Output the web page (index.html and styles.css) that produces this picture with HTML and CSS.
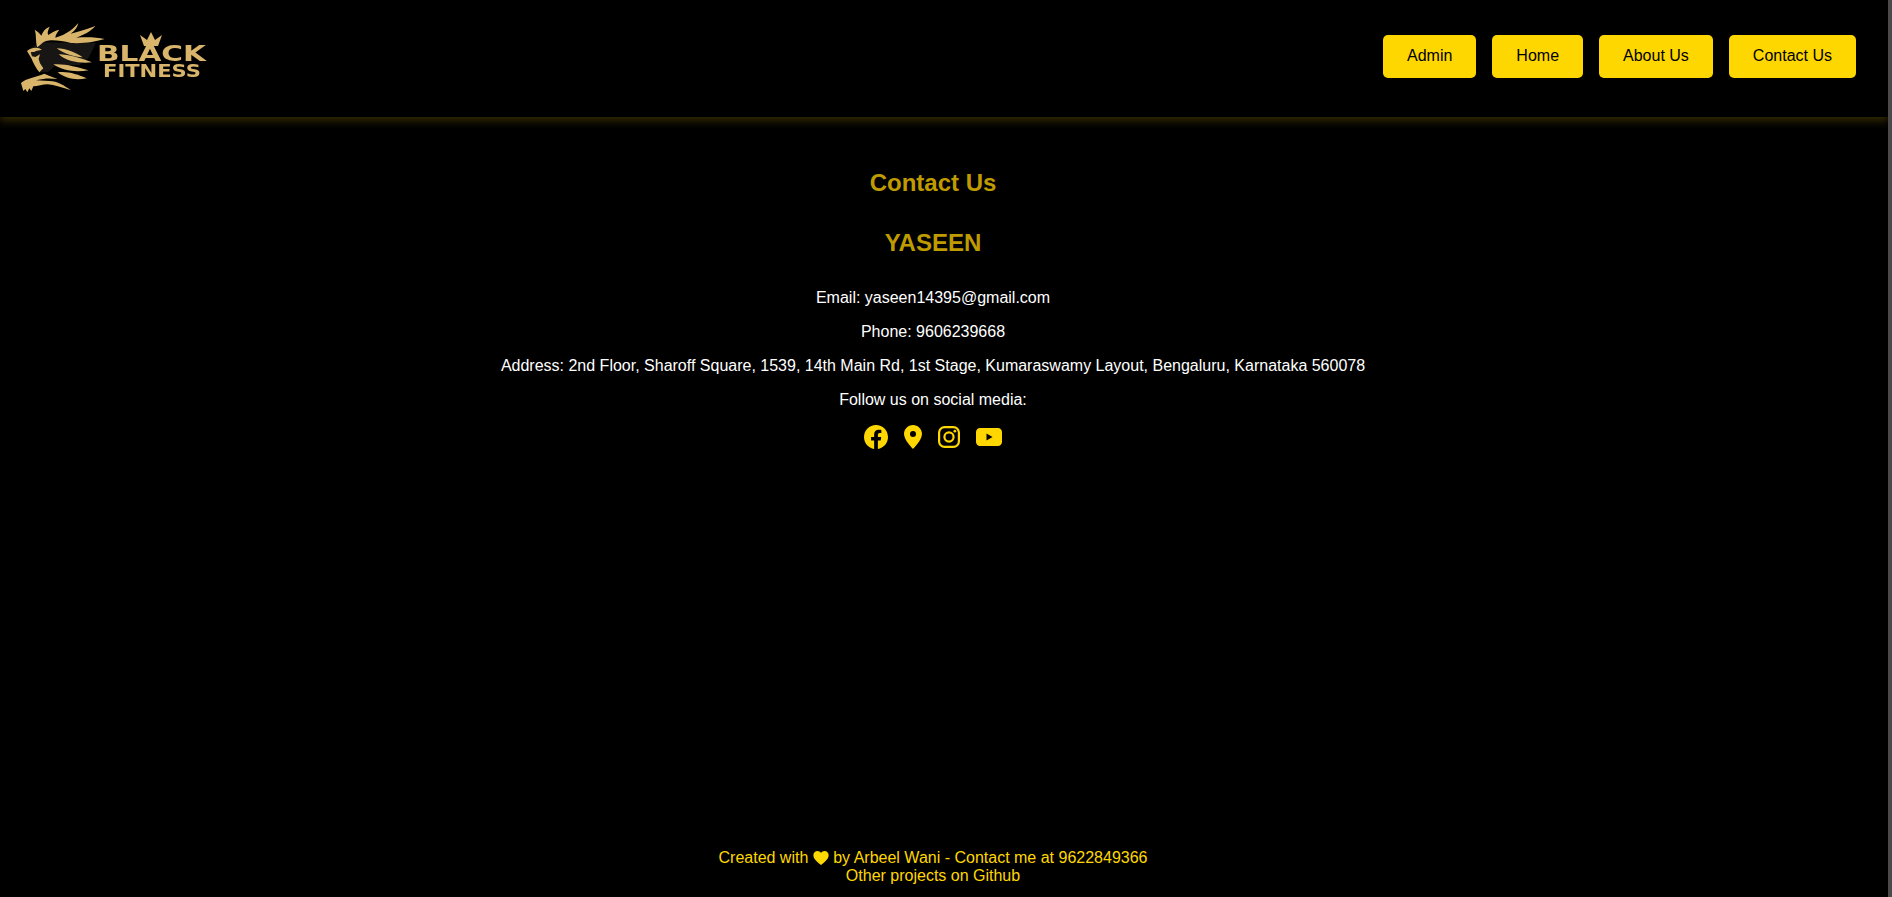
FILE: index.html
```html
<!DOCTYPE html>
<html lang="en">

<head>
    <meta charset="UTF-8">
    <meta name="viewport" content="width=device-width, initial-scale=1.0">
    <title>Black Fitness</title>
    <link rel="stylesheet" href="styles.css">
</head>

<body>
    <header class="navbar">
        <a class="logo" href="#">
            <svg viewBox="0 0 200 80" width="200" height="80">
                <g transform="translate(0 -7) scale(0.3333)">
                    <path class="lion-dark" d="M38 103 L72 82 L240 84 L218 128 L190 150 L120 150 L95 172 L72 172 L50 130 Z" />
                    <path d="M64 97 C58 80 62 60 56 44 C66 50 72 56 76 62 C80 50 88 40 101 35 C96 46 93 54 97 60 C108 52 118 46 130 44 C124 52 118 60 118 68 C140 62 165 50 187 24 C184 38 176 48 164 56 C190 50 212 42 238 33 C224 50 202 60 180 68 C210 66 240 66 266 72 C240 80 205 86 165 84 C135 76 105 74 90 78 C78 82 72 92 64 97 Z" />
                    <path d="M33 108 C40 103 48 98 60 98 C68 98 72 100 78 104 L60 108 C56 112 50 110 44 112 L48 124 L58 126 L72 118 L68 132 L72 145 L82 160 L70 172 C60 160 54 148 46 130 Z" />
                    <path d="M122 100 C150 100 185 115 200 127 C175 125 145 118 122 100 Z" />
                    <path d="M128 118 C160 118 195 130 228 142 C195 146 150 140 128 118 Z" />
                    <path d="M112 148 C145 145 180 155 218 166 C180 172 140 168 112 148 Z" />
                    <path d="M125 172 C155 168 185 178 212 190 C180 196 150 192 125 172 Z" />
                    <path d="M15 204 C30 190 60 186 85 176 C100 182 110 186 125 192 C105 190 90 188 60 196 L100 198 C125 198 145 212 165 226 C140 218 115 210 95 208 C80 208 65 214 52 214 L46 228 L40 220 L34 232 L28 222 L22 228 Z" />
                </g>
                <path d="M124 13 L131 18 L135 10 L139 18 L146 13 L142 24 L128 24 Z" />
                <text class="logo-black" x="81" y="39" textLength="109" lengthAdjust="spacingAndGlyphs">BLACK</text>
                <text class="logo-fitness" x="87" y="55" textLength="98" lengthAdjust="spacingAndGlyphs">FITNESS</text>
            </svg>
        </a>
        <nav class="nav-links">
            <a class="nav-btn" href="#">Admin</a>
            <a class="nav-btn" href="#">Home</a>
            <a class="nav-btn" href="#">About Us</a>
            <a class="nav-btn" href="#">Contact Us</a>
        </nav>
    </header>

    <main class="contact">
        <h2>Contact Us</h2>
        <h2 class="name">YASEEN</h2>
        <p>Email: yaseen14395@gmail.com</p>
        <p>Phone: 9606239668</p>
        <p>Address: 2nd Floor, Sharoff Square, 1539, 14th Main Rd, 1st Stage, Kumaraswamy Layout, Bengaluru, Karnataka 560078</p>
        <p>Follow us on social media:</p>
        <div class="social">
            <a href="#">
                <svg viewBox="0 0 24 24" width="24" height="24">
                    <path d="M24 12.07C24 5.4 18.63 0 12 0S0 5.4 0 12.07c0 6.03 4.39 11.02 10.13 11.93v-8.44H7.08v-3.49h3.05V9.41c0-3.02 1.79-4.69 4.53-4.69 1.31 0 2.69.24 2.69.24v2.97h-1.51c-1.49 0-1.96.93-1.96 1.88v2.26h3.33l-.53 3.49h-2.8V24C19.61 23.09 24 18.1 24 12.07z" />
                </svg>
            </a>
            <a href="#">
                <svg viewBox="0 0 18 24" width="18" height="24">
                    <path fill-rule="evenodd" d="M9 0C4 0 0 4 0 9c0 6 9 15 9 15s9-9 9-15c0-5-4-9-9-9zm0 12a3 3 0 1 1 0-6 3 3 0 0 1 0 6z" />
                </svg>
            </a>
            <a href="#">
                <svg viewBox="0 0 24 24" width="22" height="22" class="insta">
                    <rect x="1.2" y="1.2" width="21.6" height="21.6" rx="6" />
                    <circle cx="12" cy="12" r="5" />
                    <circle class="dot" cx="18.4" cy="5.6" r="1.5" />
                </svg>
            </a>
            <a href="#">
                <svg viewBox="0 0 26 18" width="26" height="18">
                    <path fill-rule="evenodd" d="M4 0h18c2.2 0 4 1.8 4 4v10c0 2.2-1.800 4-4 4H4c-2.200 0-4-1.800-4-4V4c0-2.200 1.800-4 4-4zm6.500 5.500v7l6-3.500z" />
                </svg>
            </a>
        </div>
    </main>

    <footer class="footer">
        <div>Created with <svg class="heart" viewBox="0 0 24 22" width="16" height="14">
                <path d="M12 22 C5 16 0 12 0 6.5 C0 2.8 2.8 0 6.4 0 C8.6 0 10.8 1.1 12 3 C13.2 1.1 15.4 0 17.6 0 C21.2 0 24 2.8 24 6.5 C24 12 19 16 12 22 Z" />
            </svg> by Arbeel Wani - Contact me at 9622849366</div>
        <a href="#">Other projects on Github</a>
    </footer>
</body>

</html>
```

FILE: styles.css
```css
html {
    height: 100%;
}

body {
    margin: 0;
    box-sizing: border-box;
    min-height: 100%;
    display: flex;
    flex-direction: column;
    background: #000;
    border-right: 4px solid #4a4a4a;
    color: #fff;
    font-family: "Liberation Sans", Arial, sans-serif;
    font-size: 16px;
}

a {
    text-decoration: none;
    color: inherit;
}

.navbar {
    height: 117px;
    box-sizing: border-box;
    padding: 35px 32px 0 16px;
    display: flex;
    align-items: flex-start;
    justify-content: space-between;
    box-shadow: 0 4px 8px rgba(255, 215, 0, 0.2);
}

.logo {
    display: block;
    margin-top: -13px;
}

.logo svg {
    display: block;
    fill: #d9b56c;
    filter: blur(0.3px);
}

.logo .lion-dark {
    fill: #171614;
}

.logo text {
    font-family: "DejaVu Sans", sans-serif;
    font-weight: 700;
}

.logo-black {
    font-size: 21px;
}

.logo-fitness {
    font-size: 17px;
}

.nav-links {
    display: flex;
    gap: 16px;
}

.nav-btn {
    height: 43px;
    padding: 0 24px 2px;
    box-sizing: border-box;
    display: flex;
    align-items: center;
    background: #ffd700;
    color: #000;
    border-radius: 5px;
}

.contact {
    flex: 1;
    text-align: center;
    padding: 52px 22px 0 0;
}

.contact h2 {
    margin: 0 0 32px;
    font-size: 24px;
    line-height: 28px;
    color: #bf9b00;
}

.contact p {
    margin: 0 0 16px;
    line-height: 18px;
}

.social {
    display: flex;
    justify-content: center;
    align-items: center;
    gap: 16px;
}

.social svg {
    display: block;
    fill: #ffd700;
}

.social .insta {
    fill: none;
    stroke: #ffd700;
    stroke-width: 2.4;
}

.social .insta .dot {
    fill: #ffd700;
    stroke: none;
}

.footer {
    padding: 0 22px 12px 0;
    text-align: center;
    color: #ffd700;
    line-height: 18px;
}

.heart {
    fill: #ffd700;
    vertical-align: -2px;
}
```
